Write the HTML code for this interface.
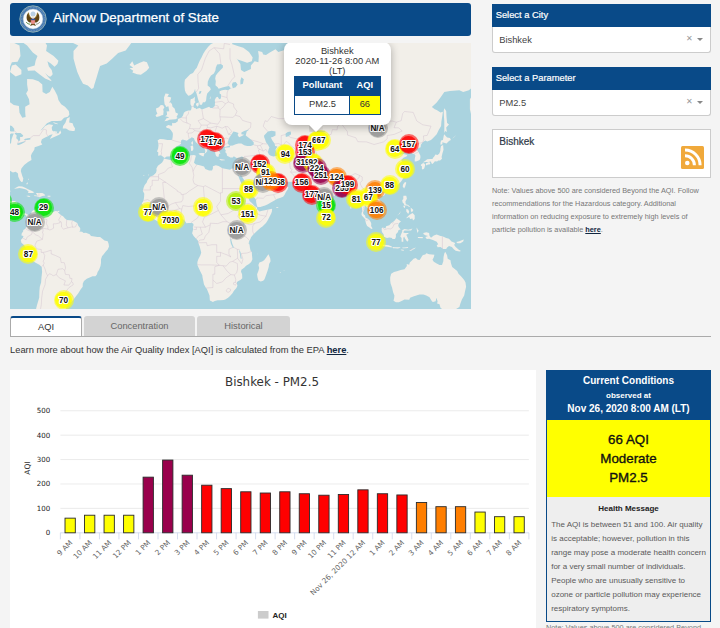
<!DOCTYPE html>
<html lang="en">
<head>
<meta charset="utf-8">
<title>AirNow Department of State</title>
<style>
*{box-sizing:border-box;margin:0;padding:0}
html,body{width:720px;height:628px;overflow:hidden;background:#f4f4f4}
body{font-family:"Liberation Sans",Arial,sans-serif;color:#333;font-size:9.33px;position:relative}
.abs{position:absolute}
#hdr{left:10px;top:3px;width:461px;height:33px;background:#094a88;border-radius:3px;color:#fff}
#hdr .t{position:absolute;left:43px;top:6.2px;font-size:13.33px;line-height:18px;white-space:nowrap;-webkit-text-stroke:0.25px #fff}
#map{left:10px;top:43px;width:461px;height:265.5px;background:#aad3df;overflow:hidden}
.mk{position:absolute;width:20px;height:20px;border-radius:50%;background:color-mix(in srgb,var(--c) 55%,transparent)}
.mk i{position:absolute;left:1.6px;top:1.6px;width:16.8px;height:16.8px;border-radius:50%;background:var(--c);opacity:.82}
.ml{position:absolute;width:40px;text-align:center;font-size:8.2px;line-height:10px;color:#111;font-weight:bold;text-shadow:-.8px -.8px 0 #fff,.8px -.8px 0 #fff,-.8px .8px 0 #fff,.8px .8px 0 #fff,0 1px 0 #fff,0 -1px 0 #fff,1px 0 0 #fff,-1px 0 0 #fff,0 0 1.5px #fff}
#pop{left:273.7px;top:-1px;width:107.1px;height:83px;background:#fff;border-radius:8px;box-shadow:0 2px 9px rgba(0,0,0,.3);text-align:center;font-size:9.33px;line-height:9.8px;color:#333;padding-top:5.2px}
#tip{left:298.6px;top:82px;width:14.4px;height:7.2px;overflow:hidden}
#tip i{position:absolute;left:2.2px;top:-5.4px;width:10px;height:10px;background:#fff;transform:rotate(45deg);box-shadow:0 2px 6px rgba(0,0,0,.25)}
#ptab{left:10.5px;top:34.3px;width:86.6px;height:39.2px;border:1px solid #094a88;background:#fff}
#ptab div{position:absolute;line-height:16.6px;text-align:center}
.ph{background:#094a88;color:#fff;font-size:9.33px;line-height:23px;padding-left:3.7px;-webkit-text-stroke:0.2px #fff}
.sel{background:#fff;border:1px solid #ccc;border-top:none;border-radius:0 0 3px 3px;font-size:9.33px;line-height:26.5px;padding-left:6.2px;color:#444}
.sel .x{position:absolute;left:192.5px;top:-1px;font-size:8px;color:#999}
.sel .c{position:absolute;left:204px;top:11px;width:0;height:0;border-left:3px solid transparent;border-right:3px solid transparent;border-top:3.3px solid #888}
#citybox{left:491.5px;top:129px;width:219.5px;height:48.5px;background:#fff;border:1px solid #ccc}
#note{left:492px;top:184px;width:222px;font-size:7.33px;line-height:13px;color:#777}
#note b,#learn b{color:#10253f;text-decoration:underline}
.tab{top:316px;height:20.5px;font-size:9.33px;line-height:21.5px;text-align:center;color:#666;background:#d3d3d3;border-radius:3px 3px 0 0}
#tabline{left:10px;top:336px;width:701px;height:1px;background:#aaa}
#learn{left:10px;top:343.5px;font-size:9.33px;line-height:12px;color:#333;white-space:nowrap}
#chart{left:10px;top:370px;width:526px;height:258px;background:#fff}
#cc{left:546px;top:370px;width:165px;height:251.5px;background:#eee;border:1px solid #094a88;border-top:none;text-align:center}
#cch{left:0;top:0;width:163px;height:50px;background:#094a88;color:#fff;font-weight:bold}
#cch div{position:absolute;left:0;width:163px;text-align:center;white-space:nowrap}
#ccy{left:0;top:50px;width:163px;height:77px;background:#ffff00;color:#111;font-size:13.33px;line-height:19px;padding-top:9.5px;-webkit-text-stroke:0.35px #111}
#hm{left:0;top:133.6px;width:163px;font-size:8px;font-weight:bold;color:#222;text-align:center}
#hmt{left:4.2px;top:147.7px;width:160px;font-size:8px;line-height:14px;color:#5a5a5a;text-align:left}
#n2{left:546px;top:621px;font-size:7.33px;line-height:13px;color:#777;white-space:nowrap}
</style>
</head>
<body>
<div id="hdr" class="abs"><svg class="abs" style="left:9.4px;top:2.4px" width="28" height="28" viewBox="0 0 28 28">
<circle cx="14" cy="14" r="13.2" fill="#4577ad" stroke="#9bb8b6" stroke-width="0.9"/>
<circle cx="14" cy="14" r="11.6" fill="none" stroke="#6d97c4" stroke-width="1.6" stroke-dasharray="0.7 0.9"/>
<circle cx="14" cy="14" r="9.9" fill="#fbfcfd" stroke="#b9cbd9" stroke-width="0.5"/>
<circle cx="14" cy="9.1" r="2.5" fill="#b8cfe3"/>
<path d="M13.200 13.300C11.500 12.800 10 10.500 9.600 7.600C8 9 7.200 11.500 7.800 14.200C8.300 16 9.600 17.200 11.400 17.800L13.100 15.600Z" fill="#5f4414"/>
<path d="M14.800 13.300C16.500 12.800 18 10.500 18.400 7.600C20 9 20.800 11.500 20.200 14.200C19.700 16 18.400 17.200 16.600 17.800L14.900 15.600Z" fill="#5f4414"/>
<path d="M9.600 7.600C9.700 10 10.600 12 12.300 13.200" fill="none" stroke="#a8862f" stroke-width="0.7"/>
<path d="M18.400 7.600C18.300 10 17.400 12 15.700 13.200" fill="none" stroke="#a8862f" stroke-width="0.7"/>
<path d="M12.600 18.200L11 21L14 20L17 21L15.400 18.200Z" fill="#6a4d1c"/>
<path d="M7.200 17.200C8.400 18.600 9.800 19.200 11.200 19.200" fill="none" stroke="#5f8a3a" stroke-width="1"/>
<path d="M20.800 17.200C19.600 18.600 18.200 19.200 16.800 19.200" fill="none" stroke="#8a8a7a" stroke-width="0.9"/>
<circle cx="14" cy="11.900" r="1.200" fill="#e9e4d6"/>
<path d="M11.900 13.700H16.100V16.600C16.100 18 15.200 18.900 14 19.300C12.800 18.900 11.900 18 11.900 16.600Z" fill="#e25b52"/>
<path d="M12.900 15V18.600M14 15V19.200M15.100 15V18.600" stroke="#fbeceb" stroke-width="0.45"/>
<path d="M11.900 13.700H16.100V15.200H11.900Z" fill="#2f5597"/>
</svg><span class="t">AirNow Department of State</span></div>
<div id="map" class="abs">
<svg class="abs" style="left:0;top:0" width="461" height="266" viewBox="0 0 461 266"><rect width="461" height="266" fill="#aad3df"/><path d="M153.8 115.6L161.2 117.2L165.0 115.6L170.7 113.3L178.3 112.8L184.0 112.1L185.9 112.8L184.9 116.3L184.0 119.8L185.9 121.6L189.7 122.3L194.0 123.6L195.3 125.9L199.1 127.6L202.0 127.6L202.9 125.4L202.9 123.2L205.8 122.3L208.6 122.9L212.4 125.2L216.2 125.9L220.0 126.7L221.9 125.6L224.7 125.4L226.3 126.1L226.6 128.7L226.8 129.8L228.5 133.3L229.5 136.3L231.4 140.5L232.7 143.6L235.0 145.6L235.5 147.7L235.7 150.7L238.0 153.7L239.5 158.1L241.8 160.0L244.6 163.1L246.9 164.5L247.1 166.3L249.4 168.4L252.2 167.8L256.0 167.0L259.8 166.3L262.1 165.7L261.9 168.4L261.3 170.3L259.8 173.2L257.9 177.0L256.0 179.9L252.2 183.7L250.9 184.6L247.5 187.5L244.6 190.3L242.7 192.2L241.2 194.1L240.3 196.2L239.3 197.9L238.6 200.6L239.5 201.5L239.9 204.6L240.5 207.5L241.8 209.0L242.0 212.3L242.4 216.2L241.2 219.1L239.0 221.1L236.1 222.7L234.2 224.7L231.4 226.7L231.0 228.7L232.1 231.2L232.3 235.3L230.4 237.0L227.6 238.4L226.8 239.5L227.4 242.7L226.4 245.0L224.4 247.2L223.8 247.9L222.5 250.3L220.0 253.0L218.1 254.8L215.3 256.6L213.7 257.0L210.5 257.3L207.7 257.3L204.8 257.9L202.9 258.9L201.0 257.9L199.9 257.5L199.7 255.4L199.5 252.5L198.2 249.2L196.9 245.9L195.7 244.4L194.0 241.6L193.4 238.4L192.5 234.3L192.3 232.2L190.6 229.1L188.7 225.1L187.4 222.1L187.4 219.1L188.3 216.2L190.4 212.3L191.2 209.4L190.2 205.5L189.7 203.6L188.3 199.8L188.1 197.9L187.4 196.9L185.9 195.4L183.6 193.0L182.1 190.3L182.6 188.4L183.2 186.1L182.8 184.0L183.6 182.1L183.2 180.8L181.7 179.7L180.7 179.9L178.3 180.0L176.4 180.2L175.1 178.3L173.5 176.4L171.4 176.2L169.7 176.4L167.3 176.8L165.0 177.8L162.2 179.1L160.3 178.9L158.4 178.5L156.5 178.5L153.6 179.3L150.8 180.0L147.9 178.5L144.5 176.4L142.6 175.1L141.3 174.1L140.0 172.2L139.4 170.3L137.5 168.4L136.6 167.4L134.7 165.5L133.3 164.5L133.1 162.6L131.8 160.2L133.1 158.6L133.7 156.7L134.1 153.7L134.3 150.7L132.8 147.7L133.7 144.6L134.7 142.1L136.6 139.8L137.5 137.3L139.4 134.8L140.3 133.5L143.2 132.4L146.0 129.8L146.6 127.6L146.4 125.4L147.9 122.7L150.6 120.7L152.1 119.5L153.6 117.0ZM258.5 211.3L260.2 215.2L260.6 218.2L259.1 221.1L258.7 224.1L257.5 228.1L256.0 232.2L254.5 236.3L253.2 237.8L250.7 238.4L248.4 237.4L247.5 234.3L247.1 231.2L248.4 228.1L249.2 225.1L248.4 222.1L249.4 219.5L252.2 218.6L254.1 217.2L256.0 214.8L257.5 212.5ZM154.4 115.1L153.1 113.7L151.0 112.3L148.1 112.8L148.3 109.2L147.0 108.5L148.1 105.5L148.5 102.5L148.1 99.2L147.6 97.4L149.8 96.1L153.6 96.3L157.4 96.9L161.2 96.9L162.2 96.6L162.7 93.7L162.9 91.0L162.5 89.4L160.8 86.9L159.3 85.5L156.5 84.7L156.1 83.2L158.4 82.1L161.2 82.7L162.2 82.4L162.0 79.8L162.7 80.3L165.4 80.1L167.8 78.3L168.0 75.9L169.7 75.3L171.6 74.4L173.0 72.6L173.9 69.8L175.4 68.5L178.3 67.5L180.5 67.5L181.3 66.3L181.7 63.7L180.5 61.3L180.4 57.9L180.7 56.2L183.0 55.5L184.9 53.7L184.7 57.9L185.5 59.0L184.3 60.3L183.6 62.3L183.4 63.7L184.3 65.0L185.9 65.3L185.9 66.3L187.8 65.6L189.7 65.0L191.9 66.6L195.3 65.3L199.1 63.7L200.5 65.0L202.5 65.0L204.8 63.0L205.0 59.6L204.8 56.9L206.0 54.5L207.7 53.7L209.2 56.2L210.9 55.5L211.1 51.6L209.6 50.5L209.6 48.3L212.0 47.2L215.3 46.8L218.1 47.2L220.9 45.3L222.3 45.7L220.0 44.6L219.0 43.0L216.2 43.4L212.4 44.6L208.6 45.7L207.7 44.2L205.4 42.2L205.8 38.3L205.2 35.5L205.8 32.5L207.7 30.0L210.5 26.9L212.8 24.7L213.0 22.5L210.9 21.1L207.1 21.5L205.8 24.7L205.4 27.4L203.9 30.4L201.0 32.5L199.1 35.5L197.8 38.7L197.6 42.6L200.1 44.6L200.8 46.4L199.5 47.9L197.2 50.5L196.5 53.4L196.1 57.6L195.0 59.3L192.9 59.3L191.9 61.7L189.7 61.7L189.3 59.6L188.7 58.3L187.8 55.2L187.2 52.7L186.2 49.4L185.3 47.9L185.1 45.7L184.0 49.0L182.1 50.9L180.2 52.3L178.3 52.7L175.8 49.8L174.9 47.2L174.5 43.4L174.5 39.5L174.9 36.7L177.3 34.2L180.2 31.3L183.0 30.0L184.9 26.9L186.8 24.7L188.3 21.1L189.7 17.8L191.5 14.4L193.4 10.4L195.3 7.4L198.2 3.7L201.0 1.0L204.8 -0.7L208.6 -3.0L213.7 -6.4L218.1 -5.8L221.9 -3.0L223.8 -1.8L221.9 1.0L227.6 3.1L233.3 4.7L239.0 8.9L242.7 14.4L241.8 18.3L237.1 19.7L231.4 17.8L227.6 16.4L226.6 15.4L230.4 21.1L231.0 26.9L234.2 29.1L237.1 27.8L240.9 26.1L240.9 22.5L244.6 18.3L248.4 19.2L248.8 12.9L248.1 7.9L252.2 8.9L253.2 11.4L256.0 11.9L259.8 9.4L265.5 6.3L268.3 8.9L273.1 7.4L278.8 5.3L286.4 3.7L293.9 7.9L292.1 -5.8L297.7 -18.1L303.4 -8.8L302.5 5.3L304.9 12.9L301.5 18.7L305.3 15.4L307.2 7.9L305.3 -0.2L306.3 -11.8L311.0 -11.8L312.9 -5.8L316.7 -11.8L318.6 -21.4L330.0 -31.9L345.1 -39.5L362.2 -51.9L373.6 -43.5L379.3 -24.8L392.6 -18.1L405.8 -14.9L411.5 -5.8L421.0 -8.8L430.5 -14.9L449.4 -5.8L468.4 -0.2L487.4 2.6L496.9 20.2L487.4 37.5L474.1 41.5L468.4 41.5L464.6 49.0L459.9 56.2L459.9 66.3L462.1 75.6L468.4 69.4L472.2 59.6L474.1 52.7L476.0 45.3L468.4 39.5L458.9 47.2L453.2 49.0L449.4 47.2L440.0 47.9L434.3 49.0L430.5 54.5L426.7 59.6L421.9 64.0L424.8 66.3L426.7 66.9L430.5 69.4L432.9 68.8L432.4 72.6L431.4 78.6L431.1 82.9L428.6 87.2L426.7 91.3L422.9 95.3L421.0 97.1L417.2 98.4L415.3 97.4L412.8 99.2L410.9 101.8L410.6 104.3L407.7 105.5L406.8 106.7L408.7 109.2L410.4 112.8L410.4 115.1L409.6 117.0L406.8 118.2L404.7 118.6L404.7 116.3L405.1 114.0L405.5 112.8L404.3 111.1L402.0 110.4L402.6 107.5L401.1 106.0L398.2 106.3L395.4 108.0L396.0 104.3L394.5 103.5L391.6 106.0L388.8 107.5L388.2 109.2L390.7 111.6L393.5 110.9L397.3 112.1L396.7 113.3L393.5 114.7L391.2 117.0L393.1 119.8L394.5 123.2L396.2 125.4L395.4 127.0L393.5 127.8L396.0 129.2L396.0 131.3L394.5 133.1L393.1 135.2L392.0 137.3L390.7 139.0L388.8 140.7L386.5 142.9L384.0 144.0L381.6 145.0L379.3 145.6L376.4 146.6L374.5 147.2L374.2 149.1L373.2 147.0L370.7 146.2L368.9 147.2L367.0 149.3L365.6 151.7L367.0 154.1L368.9 156.7L370.7 158.2L372.1 161.6L372.3 164.5L371.7 166.4L368.9 168.4L367.5 168.8L367.0 170.3L364.7 171.8L363.7 170.3L364.1 169.0L362.2 168.4L360.3 167.4L359.4 165.5L356.5 164.1L355.6 162.6L354.6 163.1L354.3 166.4L353.1 169.3L353.3 170.9L355.0 172.6L355.6 174.7L357.5 175.5L359.0 176.6L360.7 178.9L361.3 180.8L361.1 183.1L362.6 185.6L361.3 185.9L359.4 184.6L357.1 182.9L356.1 180.8L355.4 178.0L355.0 176.0L353.7 174.5L352.0 172.8L351.4 171.3L352.0 168.4L352.2 165.5L351.2 162.6L350.5 159.6L350.1 156.7L348.6 155.7L346.1 157.9L343.8 157.7L344.2 154.7L343.3 151.7L341.4 149.7L339.5 146.6L338.5 144.6L336.6 145.0L333.8 145.6L331.9 146.0L330.0 146.6L329.0 149.3L327.1 150.3L324.3 152.7L321.4 155.7L319.5 157.3L317.3 158.6L316.7 161.6L317.3 163.5L316.3 165.5L316.3 168.4L314.8 170.3L313.3 171.5L312.0 173.0L310.1 171.3L309.1 168.4L307.8 165.5L306.7 162.6L305.9 159.6L304.4 156.7L303.4 153.7L303.1 151.7L302.9 148.7L302.7 146.6L301.5 147.0L299.6 148.1L297.7 147.7L295.8 145.2L297.7 144.4L296.8 143.6L294.9 142.5L293.0 141.5L292.1 139.8L291.1 138.6L287.3 139.0L282.6 139.0L278.8 138.8L275.9 138.4L273.7 137.3L272.7 135.2L270.2 135.8L267.4 135.8L264.6 134.1L261.7 132.0L260.8 129.8L258.9 128.3L257.5 128.3L256.0 129.2L256.0 130.9L257.5 133.5L259.8 135.8L260.2 137.7L261.7 137.3L262.7 138.4L262.8 140.0L264.6 141.1L267.4 141.1L269.9 138.8L271.6 136.9L272.0 139.4L273.1 141.5L275.9 142.3L278.4 144.6L277.5 146.8L275.9 148.9L274.6 151.7L273.1 153.7L269.9 155.1L267.4 155.7L264.0 157.7L260.8 159.6L257.9 161.2L255.1 162.6L250.3 163.9L247.5 164.1L246.9 162.6L246.2 159.6L246.0 156.7L243.7 153.7L241.8 150.7L239.3 147.0L238.0 143.6L235.7 140.5L234.2 137.3L231.9 133.5L231.0 132.0L231.4 129.8L230.4 132.0L230.0 133.5L228.5 132.0L227.2 129.2L226.4 126.1L228.5 126.3L230.0 125.6L231.0 123.6L231.4 122.0L232.5 119.1L233.1 116.3L233.5 114.0L231.4 113.5L228.9 114.7L226.6 114.9L223.8 113.3L222.8 114.4L220.4 114.4L218.1 113.3L217.0 112.8L216.6 110.4L215.3 109.2L215.8 107.2L214.7 106.0L214.9 104.8L217.1 104.5L220.0 104.3L220.0 102.8L222.8 102.5L225.7 101.2L228.5 100.5L231.4 100.5L234.2 102.3L237.1 103.0L240.9 103.0L243.7 101.8L243.7 99.2L240.9 96.6L238.0 94.2L235.7 92.6L236.7 88.6L239.3 86.6L237.1 86.9L234.2 88.0L231.4 89.4L231.4 91.3L234.2 91.8L231.4 93.2L229.1 94.2L227.6 92.1L228.5 89.9L225.7 89.1L223.4 88.6L221.3 91.8L219.4 94.5L218.5 96.9L217.5 99.2L218.5 101.5L220.0 102.5L218.1 103.0L216.2 103.8L214.7 104.0L214.3 103.3L211.5 103.3L210.1 105.0L208.2 104.5L208.0 107.0L209.2 108.5L210.5 110.4L209.0 111.1L208.6 113.7L207.3 113.7L206.1 113.0L205.4 110.9L205.2 109.4L203.9 106.7L202.5 104.8L201.8 101.8L201.0 100.0L198.2 97.9L195.3 96.3L193.4 93.7L192.1 92.1L190.8 91.8L191.0 90.8L188.5 91.8L188.5 94.5L190.6 96.3L191.9 99.2L194.4 100.5L195.3 101.0L197.2 103.0L199.7 104.8L199.9 105.8L197.2 104.5L196.5 106.0L197.4 108.0L195.7 110.1L194.8 110.4L195.3 108.0L194.4 105.3L192.5 103.8L189.7 102.3L188.1 101.0L185.9 99.2L184.5 97.1L184.0 95.3L181.7 94.2L180.2 95.6L179.0 96.1L176.8 97.7L174.5 96.9L172.6 96.6L171.1 97.4L170.9 99.5L171.1 100.7L169.2 102.0L166.5 103.5L165.0 106.0L164.4 107.0L165.2 108.5L163.9 110.4L162.2 111.8L160.8 113.3L158.4 113.5L156.7 113.5L154.9 114.7ZM154.2 78.3L157.4 77.7L159.3 76.8L162.2 76.5L165.6 76.2L167.7 75.0L166.5 74.1L168.2 70.7L165.6 69.4L165.2 67.5L164.6 65.6L162.5 63.7L162.0 61.3L160.8 59.6L158.9 59.6L160.3 57.9L161.2 54.5L158.4 53.7L157.4 54.1L158.9 50.9L155.5 50.5L154.0 54.5L154.2 57.9L154.6 61.3L155.9 63.0L155.9 64.0L158.4 63.3L158.9 66.3L159.3 68.2L156.5 68.5L157.0 70.1L157.0 71.9L155.1 73.2L157.4 73.8L159.3 74.7L156.5 75.3L155.1 77.4ZM153.2 71.9L153.6 68.5L153.2 66.3L154.4 64.6L153.2 62.3L150.8 62.0L148.9 64.3L146.0 65.6L146.4 68.5L147.4 70.4L145.5 72.6L146.6 74.1L149.5 73.2L151.7 72.3ZM122.3 29.6L127.1 31.3L130.9 31.7L136.6 27.8L139.2 24.7L136.9 19.2L133.7 18.3L129.9 19.7L126.1 21.5L124.2 22.5L122.3 18.3L119.5 22.0L123.3 24.7L119.5 25.2L123.3 27.8ZM81.6 46.1L77.8 42.6L73.0 40.7L70.2 35.5L67.3 29.1L65.4 22.5L63.5 15.4L63.5 7.9L68.3 2.6L62.6 -0.2L61.7 -8.8L58.8 -18.1L55.0 -31.9L51.2 -39.5L127.1 -39.5L129.0 -24.8L124.2 -11.8L123.3 -3.0L119.5 2.6L115.7 7.4L108.1 9.9L102.4 15.4L96.7 20.6L90.1 22.9L88.2 29.1L86.3 35.5L84.4 41.5L83.5 44.9ZM-24.6 128.7L-3.8 128.3L0.0 127.8L2.9 129.4L5.7 128.7L8.0 130.5L8.2 133.5L9.9 137.3L11.4 139.0L12.7 138.8L13.3 135.6L12.3 133.1L10.8 128.1L11.4 125.4L14.2 122.0L18.0 119.1L21.5 117.0L20.9 112.8L21.8 110.4L24.3 106.7L24.7 104.3L28.5 103.0L32.3 101.5L30.9 99.2L31.9 96.3L35.1 94.5L37.9 93.2L39.8 92.1L42.7 91.3L39.8 96.1L43.6 94.2L49.3 91.8L51.2 89.9L50.3 87.2L48.4 90.5L44.6 89.9L42.1 87.2L41.7 84.4L43.1 82.1L38.9 81.2L35.1 82.9L32.3 86.6L30.4 87.7L33.2 84.4L37.0 80.3L41.7 78.0L47.4 78.0L51.2 77.7L54.1 74.7L57.9 73.8L59.4 71.6L58.8 67.9L55.0 63.7L51.2 61.3L48.4 56.9L47.4 52.7L44.6 47.2L42.3 43.8L39.8 49.0L36.1 50.9L32.6 49.0L32.3 41.5L28.5 38.3L22.8 36.3L17.1 35.9L17.1 41.5L18.0 47.2L16.1 50.5L19.0 56.2L19.6 61.3L15.2 63.7L15.2 69.4L15.6 74.1L12.3 74.7L9.5 69.8L8.9 63.0L3.8 62.0L-1.9 57.9L-5.7 56.2L-10.4 55.5L-11.4 49.8L-14.2 49.8L-14.2 45.3L-11.4 37.5L-7.6 31.3L-1.9 29.1L0.0 23.8L1.9 19.2L7.6 18.7L10.5 12.9L9.5 2.6L3.8 -0.2L-5.7 -5.8L-24.6 -11.8ZM52.7 85.5L56.0 85.5L59.2 87.5L62.6 88.0L64.5 88.0L65.1 85.5L63.5 82.9L62.6 80.3L59.2 79.5L59.8 74.1L56.9 75.6L55.4 79.8L53.1 82.9ZM41.7 38.3L39.8 37.5L35.1 35.5L29.4 31.3L24.7 27.4L18.0 27.8L17.1 24.7L24.7 22.5L25.6 17.8L27.5 12.9L22.8 9.4L17.1 2.6L13.3 -0.2L3.8 -0.2L-1.9 -18.1L13.3 -24.8L20.9 -18.1L32.3 -5.8L37.0 2.6L36.1 7.9L43.6 12.9L48.4 17.8L47.4 21.1L44.6 23.8L40.8 20.6L37.4 18.3L38.9 23.4L41.7 26.9L42.7 31.3L40.8 33.4L38.9 33.4L35.1 30.0L37.9 33.8L40.8 36.7ZM0.0 29.1L5.7 33.4L11.4 31.3L11.4 26.9L5.7 21.5L1.9 22.5ZM-24.6 155.7L-15.1 153.7L-9.5 152.5L-7.6 151.7L-6.6 147.7L-1.9 146.6L0.0 146.8L0.4 148.7L-0.9 150.7L-1.5 153.3L-2.4 154.7L-3.4 157.7L-2.8 158.1L-0.9 158.1L1.9 157.9L4.8 158.1L7.0 159.6L6.7 162.6L6.3 165.5L6.3 167.4L7.6 169.3L9.1 170.9L11.4 171.6L13.7 170.5L15.2 170.3L17.5 171.6L18.4 172.2L18.0 174.1L16.5 173.6L16.1 172.2L14.2 171.5L12.7 172.8L12.3 174.5L10.1 173.9L8.0 172.8L6.3 172.0L4.2 169.9L2.3 168.8L2.3 167.4L0.0 164.5L-1.3 163.1L-3.8 162.8L-6.6 161.8L-9.5 160.6L-13.3 157.7L-24.6 157.7ZM18.4 172.0L19.4 173.2L20.9 170.7L21.8 168.4L23.2 167.2L25.6 166.8L28.1 165.7L29.8 164.7L29.0 166.8L29.4 167.8L31.9 166.4L32.6 165.1L35.1 167.0L35.7 168.2L39.8 168.2L42.7 169.0L45.5 168.0L47.4 168.2L48.4 169.7L49.7 170.9L51.2 172.2L53.1 173.2L55.0 175.5L56.9 177.0L59.8 177.2L62.6 177.4L65.4 178.9L67.3 180.0L68.3 182.7L70.2 185.0L70.2 187.5L69.2 188.4L72.1 188.8L73.6 189.9L75.9 189.7L79.7 191.2L81.0 193.1L84.4 193.5L87.3 193.9L90.1 194.1L92.0 195.4L94.5 197.5L97.7 198.3L98.6 200.8L99.0 203.6L97.7 206.5L95.8 208.4L93.9 210.9L92.0 213.3L91.0 216.2L91.0 220.1L90.5 223.1L89.1 226.7L87.6 229.1L86.9 231.6L85.4 233.2L82.5 233.2L79.7 234.5L76.8 235.7L74.0 238.0L72.8 240.5L72.7 243.7L70.6 246.6L68.3 250.3L66.0 253.2L63.5 256.6L61.1 259.1L58.4 259.1L55.0 257.5L54.3 258.4L56.5 260.5L56.9 262.8L55.6 266.4L53.1 268.1L47.4 268.8L41.7 276.3L39.8 286.9L34.2 304.2L28.5 310.5L22.8 304.2L21.8 292.4L23.7 281.5L25.2 275.8L25.6 270.1L26.2 265.2L27.1 261.7L29.2 254.8L29.4 248.1L29.8 243.7L31.1 239.5L31.5 234.3L32.1 229.1L31.7 223.9L29.4 221.7L25.6 219.7L22.2 217.6L20.3 214.8L18.8 211.3L17.1 207.8L15.6 204.6L13.7 201.7L11.4 199.8L10.8 196.9L12.7 194.9L13.5 193.1L11.4 192.6L11.8 190.3L13.1 188.4L13.3 186.9L15.2 186.1L16.1 184.2L18.0 183.5L18.6 181.2L18.0 178.0L18.2 175.9L17.3 174.7ZM4.0 145.8L7.6 143.8L8.9 143.2L12.3 143.6L15.2 144.8L18.0 146.2L21.5 147.7L24.3 149.3L22.8 149.9L18.0 149.9L18.6 148.5L16.1 146.6L12.3 145.6L9.5 145.0L6.7 145.4ZM23.9 152.9L26.6 153.3L29.4 154.3L32.3 153.1L35.3 152.5L34.2 151.1L32.3 150.1L29.0 150.1L26.6 149.9L26.0 150.5L27.1 151.7L27.7 152.7L24.7 152.3ZM16.5 153.1L19.0 153.9L20.5 153.7L19.0 152.7L16.7 152.7ZM37.6 153.7L40.4 153.7L40.4 152.7L37.6 152.7ZM47.6 169.1L49.3 169.1L49.3 167.8L47.8 168.0ZM365.1 200.8L367.9 200.2L370.7 201.5L374.5 201.7L378.7 202.3L381.9 203.6L381.7 204.4L377.4 203.8L373.6 203.2L369.8 202.7L367.0 201.9ZM371.7 185.0L372.8 184.6L375.5 185.6L376.1 183.3L379.3 182.3L381.2 179.9L384.0 178.3L386.5 175.3L388.2 176.4L391.0 178.5L388.8 180.2L388.2 182.7L388.8 184.2L390.7 186.5L388.6 186.9L387.8 189.3L385.9 191.2L385.9 194.1L385.0 196.0L382.3 196.0L382.1 194.9L379.3 194.5L377.0 194.9L374.0 193.7L373.6 191.2L372.1 189.3L371.7 187.8L371.7 186.1ZM392.6 186.9L394.5 186.1L398.2 186.7L401.1 186.1L402.4 185.4L401.1 187.5L398.2 187.6L394.5 187.6L393.1 189.3L394.8 190.1L397.9 189.9L399.0 190.3L396.3 191.8L397.3 194.1L398.6 196.9L397.3 198.8L396.0 196.9L395.0 195.6L394.1 193.5L393.3 195.0L393.3 198.8L391.6 198.8L391.6 195.0L390.3 193.5L391.2 190.9L392.2 188.8L392.2 187.5ZM413.4 189.9L416.3 189.2L419.1 189.9L419.5 192.8L421.0 194.7L423.8 192.6L426.7 191.6L430.5 193.0L432.4 193.3L436.2 194.9L439.0 195.8L441.5 198.5L444.7 199.8L445.3 201.3L443.8 201.5L445.7 204.0L448.5 206.5L451.0 208.0L449.4 208.6L445.7 207.7L443.8 206.3L441.9 204.0L439.0 203.0L437.1 204.6L436.2 205.9L433.3 205.9L430.5 204.0L427.6 204.2L426.7 202.3L428.2 201.3L426.7 198.8L422.9 197.1L419.1 195.8L416.8 196.0L415.3 193.9L418.2 193.1L415.3 192.2L413.4 191.1ZM446.2 199.0L449.4 198.3L452.3 196.9L453.8 196.6L453.2 198.5L450.4 200.2L447.5 200.2ZM382.3 204.0L385.0 204.2L386.9 204.2L389.7 204.2L390.7 204.8L387.8 205.5L385.0 205.3L383.1 205.2ZM392.2 204.4L394.5 204.4L398.2 204.0L397.9 205.0L394.5 205.3L392.6 205.2ZM390.7 206.5L393.5 206.7L394.1 207.8L391.6 207.5ZM399.2 208.0L402.0 205.9L405.8 204.4L404.9 205.5L401.1 207.8ZM406.8 184.6L407.7 186.5L408.7 187.8L407.3 189.9L407.0 187.5L406.6 186.1ZM407.7 194.1L413.0 194.1L412.5 195.2L408.1 195.0ZM393.5 152.7L396.3 152.7L396.9 155.7L395.4 158.6L395.8 161.2L398.2 162.0L400.1 163.9L399.2 163.9L397.3 162.6L394.5 162.4L393.7 160.6L392.6 159.6L392.2 157.3L393.3 156.1L393.3 153.7ZM396.3 175.1L399.2 172.0L402.6 169.9L404.7 172.2L404.7 176.0L403.0 177.4L402.4 175.5L400.1 176.0L399.2 174.1L396.7 175.3ZM396.3 165.9L398.2 166.4L399.2 168.8L398.2 171.1L397.3 169.7L396.3 168.4ZM400.7 164.5L403.4 167.0L402.0 169.3L400.9 168.2ZM387.2 172.4L389.7 170.7L391.6 166.8L390.7 168.4L388.8 170.9ZM393.1 162.8L395.2 162.9L394.8 164.9L394.1 164.7ZM395.4 139.0L396.3 139.8L395.2 143.6L394.1 145.6L392.7 143.6L393.1 141.5L394.5 139.4ZM371.1 151.3L372.6 149.7L375.1 149.7L375.5 150.5L374.2 152.5L372.3 153.3L371.1 152.5ZM316.3 169.9L317.3 170.1L319.2 172.2L320.3 174.5L319.7 176.2L317.8 177.2L316.7 176.6L316.3 174.1L316.3 171.6ZM411.1 121.4L413.2 120.0L414.9 120.9L415.1 122.5L414.2 125.4L412.8 126.5L411.9 125.9L411.9 123.2L410.8 122.5ZM416.1 120.2L419.1 119.1L420.4 120.2L419.5 121.4L417.8 121.4L416.8 122.5L415.7 121.4ZM413.2 119.5L415.3 119.1L418.2 118.9L421.0 118.4L421.4 120.2L422.5 120.9L424.4 118.9L424.8 118.2L427.1 118.4L428.2 117.5L430.1 117.5L432.0 115.8L431.6 114.0L432.4 110.4L433.5 106.7L433.3 104.3L433.1 102.0L431.1 103.0L430.5 105.5L430.3 108.0L429.3 110.4L427.6 112.1L425.4 111.6L424.4 113.3L422.9 115.1L422.5 116.1L420.1 116.1L417.2 116.3L415.3 117.7L413.4 118.9ZM430.5 101.8L432.4 101.2L432.4 99.2L436.5 100.5L439.0 97.9L440.9 97.1L440.0 95.0L437.1 94.5L434.1 91.3L433.5 94.0L432.9 97.1L431.1 97.4L430.5 99.7ZM434.3 65.3L436.2 67.9L436.5 74.1L437.1 80.1L439.0 81.5L436.2 84.4L436.9 89.1L435.2 88.0L434.3 89.9L434.3 84.4L434.3 78.6L433.9 72.6L433.7 67.9ZM381.2 230.8L384.0 229.1L386.9 228.3L390.7 227.1L394.5 226.3L396.9 223.1L396.7 221.1L399.2 221.7L399.8 219.5L401.7 217.8L403.6 215.8L405.8 215.0L407.7 216.8L409.6 217.0L410.8 215.2L412.1 212.9L413.0 212.1L415.3 211.5L416.4 210.2L419.1 211.3L421.9 211.5L424.4 211.7L423.8 214.2L422.5 216.8L423.8 218.7L426.7 220.5L429.5 222.1L432.0 222.1L433.3 218.2L433.5 214.2L434.3 210.4L435.2 208.8L437.1 212.3L437.7 215.8L440.5 217.2L440.9 220.1L442.2 224.1L444.7 225.9L447.2 227.9L448.5 230.8L451.0 233.2L454.2 237.0L455.5 239.5L456.1 243.7L455.1 248.1L454.2 252.5L451.9 256.6L450.4 260.5L449.4 264.0L445.7 266.2L442.8 268.3L440.0 266.9L437.1 268.3L433.3 267.1L430.5 264.7L429.5 261.2L427.1 260.5L427.6 258.2L426.3 254.8L425.7 258.2L422.9 258.9L421.9 258.2L419.5 254.3L416.3 252.5L413.4 251.4L409.6 251.6L403.9 253.2L400.1 254.8L399.2 256.8L394.5 256.6L391.6 257.9L388.8 259.3L385.9 259.3L383.5 257.7L384.2 254.8L384.4 252.5L383.1 249.2L382.1 244.8L380.6 240.5L380.2 237.4L380.2 234.3L380.8 232.2ZM226.3 117.5L227.6 118.4L229.5 117.5L230.6 115.8L228.5 116.5L227.2 116.8ZM209.6 116.8L211.5 117.5L214.9 117.2L214.7 116.8L211.5 116.3L209.8 116.1ZM188.7 110.4L190.6 109.9L194.6 109.9L193.8 112.8L193.4 113.5L190.6 112.3L188.7 111.1ZM180.5 103.0L183.0 102.5L183.4 105.5L183.0 107.5L181.1 108.0L180.9 105.5ZM181.3 99.5L182.8 97.9L183.0 100.5L182.4 102.0L181.5 101.0ZM169.6 106.5L171.1 105.8L171.3 107.0L170.3 107.2ZM185.9 60.7L188.7 59.3L188.7 62.0L187.8 63.7L186.2 62.3ZM199.5 56.2L201.0 53.0L200.7 55.2ZM266.1 164.3L268.3 164.3L268.2 164.9L266.5 164.9ZM239.3 199.4L239.9 200.0L239.7 200.6ZM340.8 162.6L341.4 164.5L341.0 166.3L340.4 165.1ZM441.9 95.8L445.7 92.6L446.6 91.8L443.8 94.5ZM133.1 132.4L134.5 132.0L133.9 133.1ZM137.9 131.8L138.8 131.5L138.5 132.8ZM16.5 140.2L17.7 139.2L17.7 141.1L16.7 141.5ZM18.0 135.6L19.0 136.3L18.6 137.3ZM269.7 228.9L270.8 229.1L270.2 230.0ZM273.7 227.3L274.6 227.5L274.0 228.1ZM246.9 210.5L247.5 210.9L247.1 211.3ZM42.7 78.9L47.4 80.6L48.0 81.2L44.6 80.6ZM43.3 88.0L47.4 88.8L46.5 89.9L44.0 89.4Z" fill="#f2efe9"/><path d="M-15.1 81.5L-3.8 84.4L4.2 87.7L6.7 89.9L8.9 92.6L8.6 97.9L7.6 100.5L15.2 98.7L15.0 97.1L19.9 95.3L23.3 92.6L29.4 92.6L31.7 89.1L33.8 86.1L36.4 86.9L36.4 90.8L37.9 92.9M-9.8 160.6L-8.5 155.3L-4.1 154.1L-2.4 152.7M-4.1 154.1L-4.1 157.9M-4.1 160.8L-2.3 158.2M-5.9 162.0L-4.1 160.8L-1.5 162.8M-0.5 163.5L3.8 160.6L7.2 159.6M2.5 167.2L6.3 167.6M7.8 173.0L8.4 170.3M18.2 172.0L17.3 174.7M29.0 150.3L28.8 153.7M29.8 165.9L27.5 167.4L26.6 170.3L27.9 173.2L28.5 175.1L32.3 175.1L37.0 176.6L36.4 180.8L37.9 183.7L37.9 186.1M37.9 186.1L32.6 185.2L33.2 188.4L32.3 188.8L33.2 191.2L32.4 196.4M32.4 196.4L28.5 193.0L25.6 191.8L22.2 188.6M22.2 188.6L18.0 187.3L15.6 185.7M22.2 188.6L21.8 191.2L17.1 194.1L16.1 196.9L12.7 194.9M32.4 196.4L26.8 198.1L24.9 202.3L26.8 205.9L31.3 206.5L31.1 209.4L33.2 209.4M33.2 209.4L34.7 212.5L34.2 216.2L33.2 218.2L34.2 220.1L33.2 222.1L31.7 223.7M33.2 209.4L36.1 208.8L41.2 207.1L41.2 210.9L45.5 212.5L50.3 214.8L51.2 219.5L54.3 219.7L55.0 222.1L55.6 225.1L54.6 227.5M54.6 227.5L52.9 225.7L48.0 226.3L46.3 231.6M46.3 231.6L43.1 232.8L41.4 231.4L39.3 230.8L37.6 232.8M37.6 232.8L36.1 229.8L35.1 226.1L33.2 222.1M37.6 232.8L35.5 236.3L35.1 241.6L32.6 248.1L31.7 254.8L31.3 261.7L30.0 268.8L28.8 276.3M46.3 231.6L49.3 234.9L55.4 237.8L53.9 242.0L58.8 242.2L61.5 238.6M54.6 227.5L55.4 231.4L59.4 231.8L59.9 235.3L62.0 235.5L61.5 238.6M61.5 238.6L63.0 239.9L63.2 241.8L59.2 244.4L55.8 248.5M55.8 248.5L54.6 253.6L54.3 257.0M55.8 248.5L59.0 250.1L61.7 251.4L63.7 254.5L63.7 256.3M37.9 186.1L39.3 186.9L40.8 186.7L43.6 185.2L43.3 180.8L45.9 180.8L49.7 179.9L49.9 178.5M49.9 178.5L48.6 177.0L51.2 172.2M49.9 178.5L51.2 178.9L51.6 181.8L51.4 184.0L53.5 186.1L57.9 184.8M56.7 177.0L56.3 182.1L57.9 184.8M57.9 184.8L61.7 184.0L62.6 184.2M62.6 177.4L61.7 179.9L62.6 184.2M62.6 184.2L65.4 184.0L67.2 180.4M160.8 117.2L161.8 122.0L162.7 123.8L158.4 125.0L154.6 129.2L148.5 131.5L148.5 134.6M148.5 133.7L140.0 133.7M148.5 134.6L148.5 137.3L142.2 137.3L142.2 142.5L140.3 143.6L140.3 147.0L132.8 147.0M148.5 134.6L155.9 139.4L167.3 147.5L167.3 148.3L171.1 150.1L171.3 151.7L173.0 151.5M173.0 151.5L176.0 150.7L179.2 148.1L187.8 142.5M187.8 142.5L184.0 140.5L183.0 136.7L183.8 132.4L183.0 128.3M183.0 128.3L182.1 124.3L179.2 120.2L180.7 117.5L181.3 113.0M183.0 128.3L184.5 125.0L186.8 121.8M212.4 125.2L212.4 145.6L212.4 149.7L210.5 149.7L210.5 150.7M210.5 150.7L195.3 142.7L193.4 143.6L187.8 142.5M212.4 145.6L235.0 145.6M155.9 139.4L152.7 139.4L154.6 158.6L147.4 158.6L144.7 158.8L143.2 158.4L141.9 160.0M141.9 160.0L139.4 157.5L137.5 156.5L133.7 157.5M141.9 160.0L143.4 164.5M143.4 164.5L139.0 164.3L136.6 164.3L133.3 164.7M133.1 162.4L136.6 162.0L138.8 162.8L136.6 163.1L133.1 163.3M139.0 164.3L139.0 166.1L136.6 167.4M143.4 164.5L147.9 164.9L149.8 169.0M149.8 169.0L149.5 172.2L148.9 173.9M148.9 173.9L147.2 174.3L145.5 172.2M145.5 172.2L144.5 170.3L141.3 169.7L139.8 171.3M145.5 172.2L143.2 175.3M148.9 173.9L150.8 180.0M149.8 169.0L153.2 168.2L154.6 168.6M154.6 168.6L159.7 170.1M159.7 170.1L158.9 178.7M154.6 168.6L156.5 164.1L161.2 161.2L165.4 159.6M165.4 159.6L171.6 158.8L173.0 156.1L173.0 151.5M165.4 159.6L169.6 165.7M159.7 170.1L159.7 167.4L164.8 167.2M164.8 167.2L169.6 165.7M164.8 167.2L167.3 176.8M166.5 167.4L168.0 176.6M169.6 165.7L171.8 166.1L170.1 176.2M171.8 166.1L172.8 162.6L178.3 163.5L184.0 162.9L190.8 162.2M190.8 162.2L194.4 155.9L193.4 143.6M191.5 163.5L190.6 169.3L187.4 175.1L181.3 179.3M191.9 163.5L194.4 169.3L191.5 169.3L194.4 174.1M194.4 174.1L201.0 171.3L208.4 167.4M208.4 167.4L206.7 163.5L210.5 158.2L210.5 150.7M194.4 174.1L192.5 178.9L195.5 184.2M183.6 184.0L190.2 184.2L195.5 184.2M183.6 186.5L186.4 186.5L186.4 184.2M195.5 184.2L200.3 181.8L200.1 180.2L207.7 180.6L213.0 178.7L217.0 178.7M217.0 178.7L210.9 171.8L208.4 167.4M210.9 171.8L218.1 170.5L226.4 165.5L228.0 167.8L229.5 170.3M229.5 170.3L231.4 165.5L233.6 162.6L234.2 161.0M234.2 161.0L235.2 155.7L238.2 153.7M234.2 161.0L239.0 160.4L245.4 164.5M245.4 164.5L244.3 167.4L246.5 167.4L246.5 170.3L250.3 172.2L256.0 173.2L250.3 178.9L244.6 180.4M246.9 166.4L246.5 167.4M257.9 166.8L256.0 173.2M244.6 180.4L239.9 181.8L233.3 179.9M233.3 179.9L231.9 178.1L227.6 173.2L229.5 170.3M244.6 180.4L242.7 183.1L242.7 188.4L243.9 191.6M229.5 180.4L231.4 184.8L229.5 188.2L229.3 190.3M229.3 190.3L236.5 194.3L239.3 197.3M223.4 181.8L229.5 180.4L233.3 179.9M217.0 178.7L223.4 181.8M223.4 181.8L224.4 184.2L221.1 191.1M221.1 191.1L222.8 190.3L229.3 190.3M221.1 191.1L220.4 193.7L220.4 196.8M220.4 193.7L223.4 193.0M222.8 190.3L223.4 193.0L222.6 196.0L220.8 196.8M223.4 204.2L227.4 206.3L229.5 206.5M231.2 210.5L237.1 210.0L241.6 208.4M200.3 181.8L198.8 189.3L195.3 193.1L194.0 196.6L189.7 197.1L188.1 199.4M190.2 184.2L192.3 191.2L188.7 192.8L186.2 195.8M188.3 199.8L196.5 199.6L197.2 202.7L202.0 201.7L206.7 201.7L206.7 209.4L210.5 209.4L210.5 213.3M210.5 213.3L206.7 213.3L206.7 219.5L209.4 222.3M187.4 221.7L191.4 221.9L200.1 221.9L209.4 222.3M210.5 209.4L213.0 210.4L217.1 211.9L220.9 214.0L218.9 211.1L219.0 206.1L223.4 204.2M213.0 222.7L216.2 223.1L219.8 219.1L222.6 218.4M222.6 218.4L227.6 215.2L227.4 206.3M209.4 222.3L213.0 222.7M209.4 222.3L204.8 223.7L204.8 231.2L202.9 231.2L202.9 237.0M202.9 237.0L202.9 244.6L196.3 245.0M202.9 237.0L206.7 240.5L212.4 238.9L216.2 234.7L220.8 231.6M220.8 231.6L217.1 228.1L213.0 222.7M220.8 231.6L224.4 232.0M224.4 232.0L226.6 229.8L227.6 226.1L227.4 220.5L222.6 218.4M224.4 232.0L225.7 236.3L225.5 239.3L227.4 241.4M216.2 247.2L218.1 245.3L220.6 246.3L220.4 248.1L218.1 249.4L216.6 248.5L216.2 247.2M225.5 239.3L223.8 239.5L223.4 241.2L225.5 242.2L225.9 241.2M227.6 215.2L230.4 219.1L231.7 220.7L232.9 216.2L231.2 210.5M148.3 100.7L152.5 100.7L151.9 105.0L151.2 108.5L151.7 109.9L151.0 112.3M161.6 96.9L166.3 98.4L171.1 99.5M179.2 95.8L178.3 92.1L178.3 90.2M178.3 90.2L176.6 89.4L179.4 85.5M179.4 85.5L180.5 81.5L177.1 80.1M177.1 80.1L173.0 78.6L169.7 75.3M171.4 74.7L176.4 75.0M176.4 76.2L176.4 73.2L178.3 71.0L178.7 68.5M177.1 80.1L176.4 78.0L176.4 76.2M181.3 63.3L183.6 63.7M191.9 66.6L192.9 72.6L193.4 75.6M193.4 75.6L188.1 77.7L191.2 82.1M191.2 82.1L189.7 85.8L183.2 85.8M183.2 85.8L179.4 85.5M183.2 85.8L184.7 87.7L182.1 89.9L178.3 90.2M184.7 87.7L191.0 88.6M191.0 88.6L195.3 87.7L197.4 84.4M191.2 82.1L197.2 82.1M193.4 75.6L196.9 77.7L200.7 80.1M200.7 80.1L197.2 82.1L197.4 84.4M200.7 80.1L207.9 81.2M197.4 84.4L200.7 84.9L206.9 83.2M207.9 81.2L210.5 77.1L209.8 72.6L210.1 66.6M210.1 66.6L208.2 65.0L202.5 65.0M208.2 65.0L208.2 63.0L205.2 62.3M210.1 66.6L213.9 63.3L215.4 60.7M204.8 59.3L212.0 58.3L215.4 60.7M211.1 53.0L217.0 54.5M215.4 60.7L218.5 59.0L217.0 54.5M217.0 54.5L217.1 49.8L218.1 47.2M217.7 43.0L221.9 36.7L224.7 33.8L221.9 21.5L220.0 15.9L220.0 5.3M210.9 21.1L209.6 10.9L204.1 4.7M204.1 4.7L213.7 5.8L214.3 0.4L220.0 1.5M204.1 4.7L199.1 7.9L195.3 15.4L191.5 26.9L187.8 31.3L188.1 39.5L188.7 45.3L186.2 49.0M209.8 73.8L222.8 74.4L225.3 72.3M225.3 72.3L227.0 68.2L223.8 64.0L223.6 61.0L218.5 59.0M225.3 72.3L229.9 73.5L232.5 77.4L237.4 78.9L241.0 79.8L240.5 84.7L237.4 86.9M206.9 83.2L212.2 85.2L215.4 83.5L218.1 83.8L221.9 88.6M215.4 83.5L218.5 91.3L221.3 91.8M218.5 91.3L221.9 88.6M206.9 83.2L204.8 89.4L203.5 89.7M203.5 89.7L205.6 93.2L208.0 94.8M208.0 94.8L212.4 96.1L216.2 95.0L219.2 96.1M203.5 89.7L200.7 90.2L195.9 88.6M208.0 94.8L207.5 99.7L208.6 102.3M208.6 102.3L214.9 101.2L218.1 100.5M214.9 101.2L214.3 103.3M202.9 106.3L204.8 103.3L208.6 102.3M201.8 100.7L203.9 100.0L204.1 103.0L204.8 103.3M190.8 91.3L194.0 91.3L195.9 88.6M194.0 91.3L195.0 92.1L195.3 96.6M195.0 92.1L201.0 92.6L201.0 92.9M201.0 92.6L201.8 96.6L200.1 99.2M201.0 92.9L201.4 96.6L203.9 100.0L207.5 99.7M201.0 92.6L203.5 89.7M203.9 100.0L204.8 103.3M204.1 97.4L206.3 99.7M233.5 115.1L234.6 113.3L237.1 113.3L245.2 112.3L250.0 112.3M250.0 112.3L248.4 107.0L250.0 106.3M243.7 101.8L247.5 102.8L247.9 105.3L250.0 106.3M240.9 96.9L248.4 98.9L253.0 100.7M253.0 100.7L257.2 101.0M247.5 102.8L250.3 102.3L253.0 100.7M250.3 102.3L253.2 108.0M250.0 106.3L253.2 108.2L256.0 106.3L257.7 109.4M245.2 112.3L243.1 118.2L238.6 121.1M238.6 121.1L233.3 122.7M232.5 122.7L232.3 125.4L231.4 129.8M230.0 125.9L231.2 129.8M233.1 118.4L234.4 119.3L232.9 121.4L231.6 121.8M231.4 130.0L233.5 130.5L236.1 128.7L235.2 125.4L239.3 124.1M239.3 124.1L238.6 121.1M239.3 124.1L241.6 124.5L249.8 130.5L253.2 130.7M253.2 130.7L254.9 128.5L256.0 128.7M253.2 130.7L255.1 132.0L256.8 132.0M250.0 112.3L251.1 115.4L252.2 117.5L251.3 119.8L252.6 122.0L255.6 124.7L257.0 128.7M246.2 156.9L247.1 154.9L253.2 155.3L256.0 152.7L263.6 151.7M263.6 151.7L269.3 149.7L270.4 145.6L269.7 144.2M269.7 144.2L264.7 143.8L262.8 141.1M269.7 144.2L271.2 140.5L271.8 138.8L271.4 137.3M263.6 151.7L265.7 156.5M261.3 139.8L262.3 140.5M267.2 112.1L271.2 110.1L273.7 110.4L277.5 111.6L281.1 113.7L281.1 116.1M281.1 116.1L279.7 119.1L279.9 122.0L280.3 125.4L282.2 126.5L280.5 129.2M280.5 129.2L284.1 132.4L284.8 135.2L281.8 139.0M280.5 129.2L290.7 128.9L290.7 126.7L296.4 124.5L297.7 121.4L299.8 119.1L300.8 114.2L307.0 112.3M281.1 116.1L287.3 114.4L291.1 111.8M291.1 111.8L293.9 112.8L297.7 111.4L300.6 109.4L300.8 113.5L307.0 112.3M291.1 111.8L283.3 104.3L280.7 102.5L278.8 100.0L276.1 98.4L273.1 102.3L271.2 102.3L271.2 92.6M271.2 102.3L268.9 100.5L264.6 101.0M271.2 92.6L276.1 91.3L280.7 94.5L288.1 96.1L290.3 97.9L290.3 100.5L294.9 104.0L299.4 99.7M299.4 99.7L304.6 97.7L308.7 98.2L315.2 98.4L317.1 100.0M317.1 100.0L310.6 103.3L305.1 106.5M305.1 106.5L307.0 112.3M299.4 99.7L300.2 103.0L298.7 103.5L296.4 105.5L298.7 106.5L305.1 106.5M293.9 112.8L294.7 109.9L292.8 107.2L296.4 105.5M257.9 88.6L253.2 83.2L255.1 77.7L257.3 78.6L261.3 73.5L268.3 75.6L276.1 75.6L281.8 75.0L280.7 69.8L281.4 66.6L288.3 64.6L295.8 62.0L299.6 65.6L304.2 66.6L310.1 65.6L312.7 68.5L316.7 76.2L323.0 75.6L326.6 79.8L330.5 80.9M330.5 80.9L327.5 83.5L327.1 86.9L322.4 86.6L321.1 91.3L317.1 92.6L318.0 97.4L317.1 100.0M331.5 80.9L339.5 76.5L349.9 79.2L351.4 72.6L358.8 74.7L359.0 77.1L369.6 78.9L382.1 78.0L386.3 79.2M331.5 80.9L337.4 88.6L337.6 92.1L345.9 94.8L347.8 98.7L356.5 98.9L364.1 101.5L373.6 98.9L377.2 95.8L377.2 92.6L384.4 91.3L392.2 88.0L388.8 84.9L384.0 84.7L386.3 79.2M386.3 79.2L391.2 77.7L392.6 70.7L394.5 68.5L403.2 69.4L406.8 78.0L412.8 81.8L421.0 83.2L417.2 92.4L413.4 92.9L413.8 96.6L412.7 99.5M412.7 99.5L407.7 100.5L405.6 101.0L400.9 105.5M404.1 110.9L408.5 108.9M307.0 112.3L312.9 116.3L314.8 119.1L314.4 121.6L314.2 125.4L318.6 128.3M318.6 128.3L324.3 131.1L328.1 133.1L332.1 133.3M318.6 128.3L316.9 131.3L322.4 134.3L327.7 136.0L332.1 136.5L332.1 133.3M332.1 133.3L333.8 134.6L335.1 132.6L338.7 133.5L339.6 133.5L345.1 130.5L349.5 132.4M333.8 134.6L333.8 135.6L339.6 135.4L339.6 133.5M349.5 132.4L348.9 135.0L345.5 137.3L344.4 140.0L341.9 141.5L341.4 145.6L340.6 147.0M332.1 136.5L335.3 136.9L335.3 138.8L340.2 139.4L337.9 141.5L340.0 143.6L340.6 147.0M332.1 136.5L331.9 140.0L333.6 143.8L333.8 146.0M340.6 147.0L340.0 148.3M294.3 142.1L299.6 140.7L297.0 134.8L302.3 131.3L306.1 126.5L307.0 123.2L305.3 121.6L305.3 118.2L311.0 117.5L312.9 116.3M349.5 132.4L352.2 133.9L352.2 137.7L350.1 139.8L350.5 141.5L352.7 145.4L355.0 146.6L356.9 147.0M356.9 147.0L354.8 149.1M354.8 149.1L350.8 150.3L350.3 152.7L352.5 156.9L351.2 159.2L353.1 163.5L353.9 165.9L352.2 168.8M356.9 147.0L358.8 144.8M358.8 144.8L364.7 142.9L367.3 144.0L367.1 145.6L369.8 146.6M358.8 144.8L360.3 148.1L363.4 148.5L362.4 150.5L364.5 152.9L367.1 156.5L368.9 160.2M354.8 149.1L356.9 150.7L356.9 154.7L358.6 153.3L362.2 153.1L363.7 155.3L363.7 157.1L365.2 158.2L364.5 161.0M364.5 161.0L368.9 160.2M364.5 161.0L360.1 161.2L359.2 162.4L360.1 166.1M368.9 160.2L368.9 164.9L365.8 166.1L366.4 167.8L363.0 168.6M354.8 176.2L356.7 177.6L358.6 176.6M372.8 184.6L374.5 186.7L377.8 185.7L380.6 185.9L382.7 184.6L384.2 181.0L388.0 180.4M432.4 193.3L432.4 205.7M400.1 206.3L402.0 205.9L402.4 206.7M381.4 179.7L382.7 180.2L383.5 179.1" fill="none" stroke="#c4aec4" stroke-opacity="0.6" stroke-width="0.55" stroke-linejoin="round"/><path d="M254.1 92.6L257.9 88.6L261.7 87.7L265.5 88.6L265.5 92.6L262.7 94.0L260.8 94.5L262.7 97.9L264.6 100.5L265.1 103.0L267.4 103.5L265.5 106.7L267.0 110.4L267.0 112.8L263.6 113.5L260.8 112.8L258.9 111.6L257.9 109.2L258.5 106.7L259.4 104.5L257.9 101.8L256.0 99.2L255.1 96.6L254.1 94.0ZM275.6 90.5L277.8 89.1L280.7 88.6L281.1 91.3L278.4 93.2L275.9 94.0L275.6 92.6ZM361.8 74.1L364.1 73.8L367.0 71.0L370.7 67.9L373.2 62.3L372.6 60.3L370.7 63.0L368.9 67.5L365.6 70.4L362.8 72.6ZM304.4 91.3L307.2 87.7L311.0 88.3L314.8 87.7L314.8 89.1L311.0 89.4L307.6 89.1L305.7 92.1ZM225.3 189.0L227.6 187.6L229.5 188.0L229.9 190.3L228.5 192.8L226.6 193.3L225.3 191.2ZM220.6 194.9L221.3 196.9L222.3 200.8L223.8 204.6L223.0 205.0L220.9 200.8L220.2 196.9ZM229.5 206.7L230.6 209.4L231.2 213.3L231.7 215.8L230.6 215.6L230.0 211.3L229.3 208.4ZM222.8 45.3L225.7 44.2L227.6 41.5L225.7 39.1L222.8 39.5L221.9 41.5ZM230.4 41.5L232.9 40.7L233.8 36.3L231.4 34.2L230.4 37.5ZM188.7 50.9L190.6 50.5L191.5 48.3L189.7 47.9ZM4.8 89.9L10.5 89.9L13.3 92.6L12.3 94.0L10.1 94.0L10.1 97.4L8.6 97.9L6.7 95.3L6.1 96.1L6.7 92.6L4.8 90.8ZM6.8 101.2L8.6 102.0L11.4 101.0L15.2 98.7L15.2 98.2L12.3 98.9L9.5 100.0L7.6 100.5ZM13.7 97.1L17.1 97.1L20.3 96.6L20.3 95.0L18.0 95.3L15.2 95.8ZM-1.5 100.5L1.0 100.5L1.5 96.6L2.9 92.6L3.8 90.5L1.0 90.5L-0.9 92.6L-1.9 95.3ZM-9.5 88.0L-5.7 88.0L-1.9 87.2L1.0 88.6L4.2 88.6L4.2 85.8L1.9 82.9L-2.8 82.1L-5.7 84.4ZM28.8 167.8L30.0 168.4L30.4 170.3L28.8 170.9L28.5 169.3ZM232.9 179.9L233.8 180.4L234.4 183.5L233.6 183.7ZM191.2 162.6L192.7 162.6L192.5 163.9L191.4 163.9Z" fill="#aad3df"/></svg>
<div class="mk" style="left:-18.5px;top:148px;--c:#00e400"><i></i></div>
<div class="mk" style="left:-5.5px;top:159px;--c:#00e400"><i></i></div>
<div class="mk" style="left:23.5px;top:154.5px;--c:#00e400"><i></i></div>
<div class="mk" style="left:14.6px;top:169.4px;--c:#999999"><i></i></div>
<div class="mk" style="left:8.4px;top:201px;--c:#ffff00"><i></i></div>
<div class="mk" style="left:43.6px;top:247px;--c:#ffff00"><i></i></div>
<div class="mk" style="left:160px;top:102.8px;--c:#00e400"><i></i></div>
<div class="mk" style="left:187px;top:85.7px;--c:#ff0000"><i></i></div>
<div class="mk" style="left:195px;top:88.7px;--c:#ff0000"><i></i></div>
<div class="mk" style="left:128px;top:159.4px;--c:#ffff00"><i></i></div>
<div class="mk" style="left:139.2px;top:154px;--c:#999999"><i></i></div>
<div class="mk" style="left:154.8px;top:167px;--c:#ffff00"><i></i></div>
<div class="mk" style="left:146.5px;top:167px;--c:#ffff00"><i></i></div>
<div class="mk" style="left:183px;top:154.3px;--c:#ffff00"><i></i></div>
<div class="mk" style="left:216px;top:148px;--c:#b0f000"><i></i></div>
<div class="mk" style="left:227.6px;top:160.7px;--c:#ffff00"><i></i></div>
<div class="mk" style="left:216.5px;top:177.3px;--c:#999999"><i></i></div>
<div class="mk" style="left:228.6px;top:136.4px;--c:#ffff00"><i></i></div>
<div class="mk" style="left:222px;top:114px;--c:#999999"><i></i></div>
<div class="mk" style="left:239.5px;top:110.7px;--c:#ff0000"><i></i></div>
<div class="mk" style="left:245.5px;top:119.5px;--c:#ffff00"><i></i></div>
<div class="mk" style="left:242.5px;top:129.5px;--c:#999999"><i></i></div>
<div class="mk" style="left:258px;top:129.5px;--c:#ff0000"><i></i></div>
<div class="mk" style="left:250.5px;top:128px;--c:#ff7e00"><i></i></div>
<div class="mk" style="left:265.3px;top:100.8px;--c:#ffff00"><i></i></div>
<div class="mk" style="left:285px;top:91.7px;--c:#ff0000"><i></i></div>
<div class="mk" style="left:296.5px;top:87.5px;--c:#ffff00"><i></i></div>
<div class="mk" style="left:301px;top:87px;--c:#ffff00"><i></i></div>
<div class="mk" style="left:285px;top:98.7px;--c:#ff0000"><i></i></div>
<div class="mk" style="left:282.8px;top:109.5px;--c:#99004c"><i></i></div>
<div class="mk" style="left:293px;top:109.5px;--c:#ffff00"><i></i></div>
<div class="mk" style="left:296.7px;top:115.3px;--c:#99004c"><i></i></div>
<div class="mk" style="left:300.8px;top:121.7px;--c:#99004c"><i></i></div>
<div class="mk" style="left:316.7px;top:124px;--c:#ff7e00"><i></i></div>
<div class="mk" style="left:281.7px;top:129.5px;--c:#ff0000"><i></i></div>
<div class="mk" style="left:291.7px;top:141.5px;--c:#ff0000"><i></i></div>
<div class="mk" style="left:304.2px;top:144px;--c:#999999"><i></i></div>
<div class="mk" style="left:322px;top:135.3px;--c:#99004c"><i></i></div>
<div class="mk" style="left:327.5px;top:131.5px;--c:#ff0000"><i></i></div>
<div class="mk" style="left:306.3px;top:152.3px;--c:#00e400"><i></i></div>
<div class="mk" style="left:306.3px;top:164.5px;--c:#ffff00"><i></i></div>
<div class="mk" style="left:336.3px;top:146.2px;--c:#ffff00"><i></i></div>
<div class="mk" style="left:355px;top:137px;--c:#ff7e00"><i></i></div>
<div class="mk" style="left:348.3px;top:144px;--c:#ffff00"><i></i></div>
<div class="mk" style="left:356.7px;top:157px;--c:#ff7e00"><i></i></div>
<div class="mk" style="left:369.5px;top:132.3px;--c:#ffff00"><i></i></div>
<div class="mk" style="left:385px;top:116.2px;--c:#ffff00"><i></i></div>
<div class="mk" style="left:356px;top:189px;--c:#ffff00"><i></i></div>
<div class="mk" style="left:357.5px;top:75.3px;--c:#999999"><i></i></div>
<div class="mk" style="left:374.7px;top:95.7px;--c:#ffff00"><i></i></div>
<div class="mk" style="left:388.7px;top:91.2px;--c:#ff0000"><i></i></div>
<b class="ml" style="left:-15.5px;top:164.9px">48</b>
<b class="ml" style="left:13.5px;top:160.4px">29</b>
<b class="ml" style="left:4.6px;top:175.3px">N/A</b>
<b class="ml" style="left:-1.6px;top:206.9px">87</b>
<b class="ml" style="left:33.6px;top:252.9px">70</b>
<b class="ml" style="left:150px;top:108.7px">49</b>
<b class="ml" style="left:177px;top:91.6px">175</b>
<b class="ml" style="left:185px;top:94.6px">174</b>
<b class="ml" style="left:118px;top:165.3px">77</b>
<b class="ml" style="left:129.2px;top:159.9px">N/A</b>
<b class="ml" style="left:144.8px;top:172.9px">30</b>
<b class="ml" style="left:136.5px;top:172.9px">70</b>
<b class="ml" style="left:173px;top:160.2px">96</b>
<b class="ml" style="left:206px;top:153.9px">53</b>
<b class="ml" style="left:217.6px;top:166.6px">151</b>
<b class="ml" style="left:206.5px;top:183.2px">N/A</b>
<b class="ml" style="left:218.6px;top:142.3px">88</b>
<b class="ml" style="left:212px;top:119.9px">N/A</b>
<b class="ml" style="left:229.5px;top:116.6px">152</b>
<b class="ml" style="left:235.5px;top:125.4px">91</b>
<b class="ml" style="left:232.5px;top:135.4px">N/A</b>
<b class="ml" style="left:248px;top:135.4px">158</b>
<b class="ml" style="left:240.5px;top:133.9px">120</b>
<b class="ml" style="left:255.3px;top:106.7px">94</b>
<b class="ml" style="left:275px;top:97.6px">174</b>
<b class="ml" style="left:286.5px;top:93.4px">66</b>
<b class="ml" style="left:291px;top:92.9px">67</b>
<b class="ml" style="left:275px;top:104.6px">153</b>
<b class="ml" style="left:272.8px;top:115.4px">319</b>
<b class="ml" style="left:283px;top:115.4px">92</b>
<b class="ml" style="left:286.7px;top:121.2px">224</b>
<b class="ml" style="left:290.8px;top:127.6px">251</b>
<b class="ml" style="left:306.7px;top:129.9px">124</b>
<b class="ml" style="left:271.7px;top:135.4px">156</b>
<b class="ml" style="left:281.7px;top:147.4px">177</b>
<b class="ml" style="left:294.2px;top:149.9px">N/A</b>
<b class="ml" style="left:312px;top:141.2px">255</b>
<b class="ml" style="left:317.5px;top:137.4px">199</b>
<b class="ml" style="left:296.3px;top:158.2px">15</b>
<b class="ml" style="left:296.3px;top:170.4px">72</b>
<b class="ml" style="left:326.3px;top:152.1px">81</b>
<b class="ml" style="left:345px;top:142.9px">139</b>
<b class="ml" style="left:338.3px;top:149.9px">67</b>
<b class="ml" style="left:346.7px;top:162.9px">106</b>
<b class="ml" style="left:359.5px;top:138.2px">88</b>
<b class="ml" style="left:375px;top:122.1px">60</b>
<b class="ml" style="left:346px;top:194.9px">77</b>
<b class="ml" style="left:347.5px;top:81.2px">N/A</b>
<b class="ml" style="left:364.7px;top:101.6px">64</b>
<b class="ml" style="left:378.7px;top:97.1px">157</b>
<div id="pop" class="abs">Bishkek<br>2020-11-26 8:00 AM<br>(LT)
<div id="ptab" class="abs">
<div style="left:0;top:0;width:84.6px;height:18.3px;background:#094a88"></div>
<div style="left:0;top:0;width:54.5px;color:#fff;font-weight:bold">Pollutant</div>
<div style="left:54.5px;top:0;width:30.1px;color:#fff;font-weight:bold">AQI</div>
<div style="left:0;top:18.5px;width:54.5px">PM2.5</div>
<div style="left:53.7px;top:18.3px;width:30.9px;height:18.9px;background:#ffff00;border-left:1px solid #094a88;line-height:17.2px">66</div>
</div></div>
<div id="tip" class="abs"><i></i></div>
</div>

<div class="abs ph" style="left:492px;top:4px;width:219px;height:23px">Select a City</div>
<div class="abs sel" style="left:492px;top:27px;width:219px;height:25.5px">Bishkek<span class="x">&#10005;</span><span class="c"></span></div>
<div class="abs ph" style="left:492px;top:67px;width:219px;height:23px">Select a Parameter</div>
<div class="abs sel" style="left:492px;top:90px;width:219px;height:25.5px">PM2.5<span class="x">&#10005;</span><span class="c"></span></div>
<div id="citybox" class="abs"><span class="abs" style="left:6.8px;top:5.8px;font-size:10px;line-height:12px;color:#2f3a48;-webkit-text-stroke:0.2px #2f3a48">Bishkek</span><svg class="abs" style="left:188.8px;top:16.4px" width="23" height="23" viewBox="0 0 23 23">
<rect width="23" height="23" rx="1.5" fill="#f0a93b"/>
<circle cx="6.3" cy="17" r="2.3" fill="#fff"/>
<path d="M4 9.800A9.400 9.400 0 0 1 13.400 19.200" fill="none" stroke="#fff" stroke-width="3"/>
<path d="M4 4.100A15.100 15.100 0 0 1 19.100 19.200" fill="none" stroke="#fff" stroke-width="3"/>
</svg></div>
<div id="note" class="abs">Note: Values above 500 are considered Beyond the AQI. Follow<br>recommendations for the Hazardous category. Additional<br>information on reducing exposure to extremely high levels of<br>particle pollution is available <b>here</b>.</div>

<div class="abs tab" style="left:10px;width:72px;background:#fff;border:1px solid #aaa;border-top:2px solid #094a88;border-bottom:none;color:#333;line-height:19px">AQI</div>
<div class="abs tab" style="left:84px;width:111px">Concentration</div>
<div class="abs tab" style="left:197px;width:93px">Historical</div>
<div id="tabline" class="abs"></div>
<div id="learn" class="abs">Learn more about how the Air Quality Index [AQI] is calculated from the EPA <b>here</b>.</div>

<div id="chart" class="abs">
<svg class="abs" style="left:0;top:0" width="526" height="258" viewBox="0 0 526 258" font-family="'DejaVu Sans','Liberation Sans',sans-serif">
<text x="40.2" y="165.2" text-anchor="end" font-size="7.05" fill="#222">0</text>
<line x1="50.4" x2="518.9" y1="138.39" y2="138.39" stroke="#e6e6e6" stroke-width="0.8"/>
<text x="40.2" y="140.8" text-anchor="end" font-size="7.05" fill="#222">100</text>
<line x1="50.4" x2="518.9" y1="113.98" y2="113.98" stroke="#e6e6e6" stroke-width="0.8"/>
<text x="40.2" y="116.4" text-anchor="end" font-size="7.05" fill="#222">200</text>
<line x1="50.4" x2="518.9" y1="89.57" y2="89.57" stroke="#e6e6e6" stroke-width="0.8"/>
<text x="40.2" y="92.0" text-anchor="end" font-size="7.05" fill="#222">300</text>
<line x1="50.4" x2="518.9" y1="65.16" y2="65.16" stroke="#e6e6e6" stroke-width="0.8"/>
<text x="40.2" y="67.6" text-anchor="end" font-size="7.05" fill="#222">400</text>
<line x1="50.4" x2="518.9" y1="40.75" y2="40.75" stroke="#e6e6e6" stroke-width="0.8"/>
<text x="40.2" y="43.1" text-anchor="end" font-size="7.05" fill="#222">500</text>
<line x1="50.4" x2="518.9" y1="162.80" y2="162.80" stroke="#ccd6eb" stroke-width="0.8"/>
<line x1="50.40" x2="50.40" y1="162.80" y2="169.30" stroke="#ccd6eb" stroke-width="0.8"/>
<line x1="69.92" x2="69.92" y1="162.80" y2="169.30" stroke="#ccd6eb" stroke-width="0.8"/>
<line x1="89.44" x2="89.44" y1="162.80" y2="169.30" stroke="#ccd6eb" stroke-width="0.8"/>
<line x1="108.96" x2="108.96" y1="162.80" y2="169.30" stroke="#ccd6eb" stroke-width="0.8"/>
<line x1="128.48" x2="128.48" y1="162.80" y2="169.30" stroke="#ccd6eb" stroke-width="0.8"/>
<line x1="148.00" x2="148.00" y1="162.80" y2="169.30" stroke="#ccd6eb" stroke-width="0.8"/>
<line x1="167.52" x2="167.52" y1="162.80" y2="169.30" stroke="#ccd6eb" stroke-width="0.8"/>
<line x1="187.04" x2="187.04" y1="162.80" y2="169.30" stroke="#ccd6eb" stroke-width="0.8"/>
<line x1="206.56" x2="206.56" y1="162.80" y2="169.30" stroke="#ccd6eb" stroke-width="0.8"/>
<line x1="226.08" x2="226.08" y1="162.80" y2="169.30" stroke="#ccd6eb" stroke-width="0.8"/>
<line x1="245.60" x2="245.60" y1="162.80" y2="169.30" stroke="#ccd6eb" stroke-width="0.8"/>
<line x1="265.12" x2="265.12" y1="162.80" y2="169.30" stroke="#ccd6eb" stroke-width="0.8"/>
<line x1="284.64" x2="284.64" y1="162.80" y2="169.30" stroke="#ccd6eb" stroke-width="0.8"/>
<line x1="304.16" x2="304.16" y1="162.80" y2="169.30" stroke="#ccd6eb" stroke-width="0.8"/>
<line x1="323.68" x2="323.68" y1="162.80" y2="169.30" stroke="#ccd6eb" stroke-width="0.8"/>
<line x1="343.20" x2="343.20" y1="162.80" y2="169.30" stroke="#ccd6eb" stroke-width="0.8"/>
<line x1="362.72" x2="362.72" y1="162.80" y2="169.30" stroke="#ccd6eb" stroke-width="0.8"/>
<line x1="382.24" x2="382.24" y1="162.80" y2="169.30" stroke="#ccd6eb" stroke-width="0.8"/>
<line x1="401.76" x2="401.76" y1="162.80" y2="169.30" stroke="#ccd6eb" stroke-width="0.8"/>
<line x1="421.28" x2="421.28" y1="162.80" y2="169.30" stroke="#ccd6eb" stroke-width="0.8"/>
<line x1="440.80" x2="440.80" y1="162.80" y2="169.30" stroke="#ccd6eb" stroke-width="0.8"/>
<line x1="460.32" x2="460.32" y1="162.80" y2="169.30" stroke="#ccd6eb" stroke-width="0.8"/>
<line x1="479.84" x2="479.84" y1="162.80" y2="169.30" stroke="#ccd6eb" stroke-width="0.8"/>
<line x1="499.36" x2="499.36" y1="162.80" y2="169.30" stroke="#ccd6eb" stroke-width="0.8"/>
<line x1="518.88" x2="518.88" y1="162.80" y2="169.30" stroke="#ccd6eb" stroke-width="0.8"/>
<rect x="55.01" y="148.15" width="10.3" height="14.65" fill="#ffff00" stroke="#2a2a2a" stroke-width="0.9"/>
<text transform="translate(63.0 173.3) rotate(-45)" text-anchor="end" font-size="7.3" fill="#666">9 AM</text>
<rect x="74.53" y="145.22" width="10.3" height="17.58" fill="#ffff00" stroke="#2a2a2a" stroke-width="0.9"/>
<text transform="translate(82.5 173.3) rotate(-45)" text-anchor="end" font-size="7.3" fill="#666">10 AM</text>
<rect x="94.05" y="145.22" width="10.3" height="17.58" fill="#ffff00" stroke="#2a2a2a" stroke-width="0.9"/>
<text transform="translate(102.0 173.3) rotate(-45)" text-anchor="end" font-size="7.3" fill="#666">11 AM</text>
<rect x="113.57" y="145.22" width="10.3" height="17.58" fill="#ffff00" stroke="#2a2a2a" stroke-width="0.9"/>
<text transform="translate(121.5 173.3) rotate(-45)" text-anchor="end" font-size="7.3" fill="#666">12 PM</text>
<rect x="133.09" y="107.15" width="10.3" height="55.65" fill="#99004c" stroke="#2a2a2a" stroke-width="0.9"/>
<text transform="translate(141.0 173.3) rotate(-45)" text-anchor="end" font-size="7.3" fill="#666">1 PM</text>
<rect x="152.61" y="90.06" width="10.3" height="72.74" fill="#99004c" stroke="#2a2a2a" stroke-width="0.9"/>
<text transform="translate(160.6 173.3) rotate(-45)" text-anchor="end" font-size="7.3" fill="#666">2 PM</text>
<rect x="172.13" y="105.19" width="10.3" height="57.61" fill="#99004c" stroke="#2a2a2a" stroke-width="0.9"/>
<text transform="translate(180.1 173.3) rotate(-45)" text-anchor="end" font-size="7.3" fill="#666">3 PM</text>
<rect x="191.65" y="115.20" width="10.3" height="47.60" fill="#ff0000" stroke="#2a2a2a" stroke-width="0.9"/>
<text transform="translate(199.6 173.3) rotate(-45)" text-anchor="end" font-size="7.3" fill="#666">4 PM</text>
<rect x="211.17" y="118.62" width="10.3" height="44.18" fill="#ff0000" stroke="#2a2a2a" stroke-width="0.9"/>
<text transform="translate(219.1 173.3) rotate(-45)" text-anchor="end" font-size="7.3" fill="#666">5 PM</text>
<rect x="230.69" y="121.79" width="10.3" height="41.01" fill="#ff0000" stroke="#2a2a2a" stroke-width="0.9"/>
<text transform="translate(238.6 173.3) rotate(-45)" text-anchor="end" font-size="7.3" fill="#666">6 PM</text>
<rect x="250.21" y="123.01" width="10.3" height="39.79" fill="#ff0000" stroke="#2a2a2a" stroke-width="0.9"/>
<text transform="translate(258.2 173.3) rotate(-45)" text-anchor="end" font-size="7.3" fill="#666">7 PM</text>
<rect x="269.73" y="121.79" width="10.3" height="41.01" fill="#ff0000" stroke="#2a2a2a" stroke-width="0.9"/>
<text transform="translate(277.7 173.3) rotate(-45)" text-anchor="end" font-size="7.3" fill="#666">8 PM</text>
<rect x="289.25" y="123.74" width="10.3" height="39.06" fill="#ff0000" stroke="#2a2a2a" stroke-width="0.9"/>
<text transform="translate(297.2 173.3) rotate(-45)" text-anchor="end" font-size="7.3" fill="#666">9 PM</text>
<rect x="308.77" y="125.21" width="10.3" height="37.59" fill="#ff0000" stroke="#2a2a2a" stroke-width="0.9"/>
<text transform="translate(316.7 173.3) rotate(-45)" text-anchor="end" font-size="7.3" fill="#666">10 PM</text>
<rect x="328.29" y="124.48" width="10.3" height="38.32" fill="#ff0000" stroke="#2a2a2a" stroke-width="0.9"/>
<text transform="translate(336.2 173.3) rotate(-45)" text-anchor="end" font-size="7.3" fill="#666">11 PM</text>
<rect x="347.81" y="119.84" width="10.3" height="42.96" fill="#ff0000" stroke="#2a2a2a" stroke-width="0.9"/>
<text transform="translate(355.8 173.3) rotate(-45)" text-anchor="end" font-size="7.3" fill="#666">Nov 26, 2020 12 AM</text>
<rect x="367.33" y="123.74" width="10.3" height="39.06" fill="#ff0000" stroke="#2a2a2a" stroke-width="0.9"/>
<text transform="translate(375.3 173.3) rotate(-45)" text-anchor="end" font-size="7.3" fill="#666">1 AM</text>
<rect x="386.85" y="124.96" width="10.3" height="37.84" fill="#ff0000" stroke="#2a2a2a" stroke-width="0.9"/>
<text transform="translate(394.8 173.3) rotate(-45)" text-anchor="end" font-size="7.3" fill="#666">2 AM</text>
<rect x="406.37" y="132.53" width="10.3" height="30.27" fill="#ff7e00" stroke="#2a2a2a" stroke-width="0.9"/>
<text transform="translate(414.3 173.3) rotate(-45)" text-anchor="end" font-size="7.3" fill="#666">3 AM</text>
<rect x="425.89" y="136.68" width="10.3" height="26.12" fill="#ff7e00" stroke="#2a2a2a" stroke-width="0.9"/>
<text transform="translate(433.8 173.3) rotate(-45)" text-anchor="end" font-size="7.3" fill="#666">4 AM</text>
<rect x="445.41" y="136.68" width="10.3" height="26.12" fill="#ff7e00" stroke="#2a2a2a" stroke-width="0.9"/>
<text transform="translate(453.4 173.3) rotate(-45)" text-anchor="end" font-size="7.3" fill="#666">5 AM</text>
<rect x="464.93" y="142.05" width="10.3" height="20.75" fill="#ffff00" stroke="#2a2a2a" stroke-width="0.9"/>
<text transform="translate(472.9 173.3) rotate(-45)" text-anchor="end" font-size="7.3" fill="#666">6 AM</text>
<rect x="484.45" y="146.69" width="10.3" height="16.11" fill="#ffff00" stroke="#2a2a2a" stroke-width="0.9"/>
<text transform="translate(492.4 173.3) rotate(-45)" text-anchor="end" font-size="7.3" fill="#666">7 AM</text>
<rect x="503.97" y="146.69" width="10.3" height="16.11" fill="#ffff00" stroke="#2a2a2a" stroke-width="0.9"/>
<text transform="translate(511.9 173.3) rotate(-45)" text-anchor="end" font-size="7.3" fill="#666">8 AM</text>
<text x="262" y="15.5" text-anchor="middle" font-size="11.9" fill="#333">Bishkek - PM2.5</text>
<text transform="translate(19.600 98) rotate(-90)" text-anchor="middle" font-size="7.6" fill="#333">AQI</text>
<rect x="247.900" y="241" width="10.600" height="7.600" fill="#cccccc"/>
<text x="262.500" y="248.200" font-size="8" font-weight="bold" font-family="Liberation Sans,sans-serif" fill="#222">AQI</text>
</svg>
</div>
<div id="cc" class="abs">
<div id="cch" class="abs"><div style="top:5px;font-size:10px;line-height:12px">Current Conditions</div><div style="top:20.5px;font-size:8px;line-height:10px">observed at</div><div style="top:33px;font-size:10px;line-height:12px">Nov 26, 2020 8:00 AM (LT)</div></div>
<div id="ccy" class="abs">66 AQI<br>Moderate<br>PM2.5</div>
<div id="hm" class="abs">Health Message</div>
<div id="hmt" class="abs">The AQI is between 51 and 100. Air quality<br>is acceptable; however, pollution in this<br>range may pose a moderate health concern<br>for a very small number of individuals.<br>People who are unusually sensitive to<br>ozone or particle pollution may experience<br>respiratory symptoms.</div>
</div>
<div id="n2" class="abs">Note: Values above 500 are considered Beyond</div>
</body>
</html>
